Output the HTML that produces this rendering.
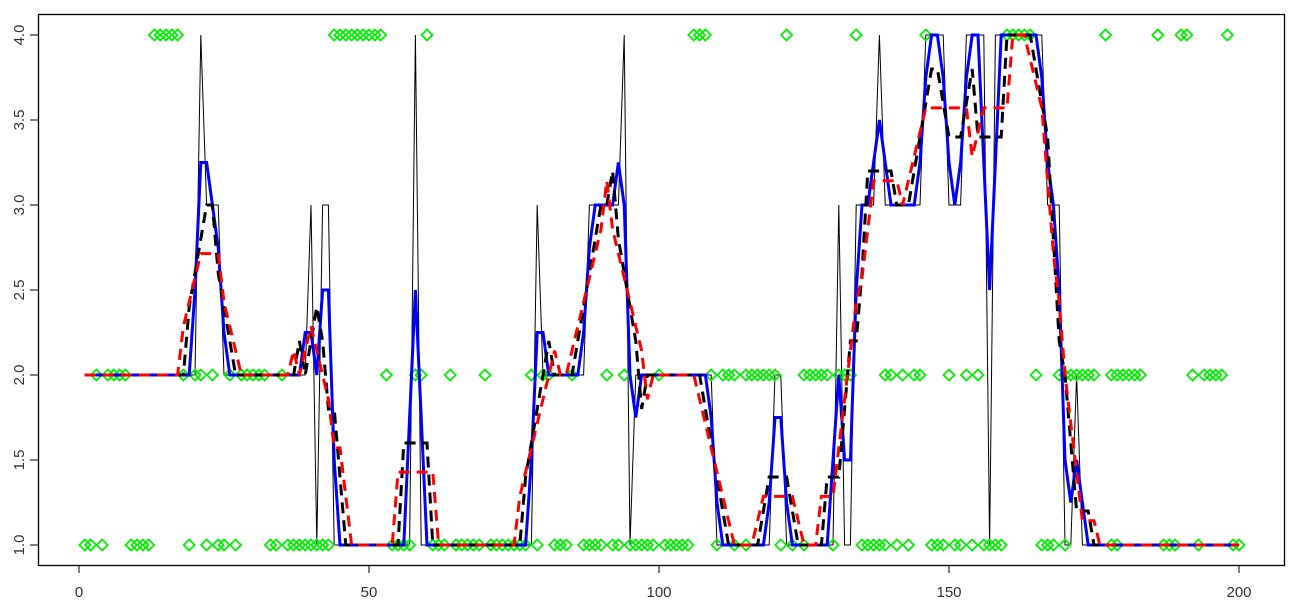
<!DOCTYPE html>
<html><head><meta charset="utf-8">
<style>
html,body{margin:0;padding:0;background:#fff;}
svg{display:block;}
text{font-family:"Liberation Sans",sans-serif;font-size:15px;fill:#333;}
</style></head>
<body>
<svg id="s" width="1295" height="609" viewBox="0 0 1295 609" xmlns="http://www.w3.org/2000/svg">
<rect x="38.5" y="14.5" width="1246" height="551" fill="none" stroke="#000" stroke-width="1.3"/>
<g stroke="#000" stroke-width="1">
<line x1="79" y1="565" x2="79" y2="573"/><line x1="369" y1="565" x2="369" y2="573"/>
<line x1="659" y1="565" x2="659" y2="573"/><line x1="949" y1="565" x2="949" y2="573"/>
<line x1="1239" y1="565" x2="1239" y2="573"/>
<line x1="38" y1="545" x2="30" y2="545"/><line x1="38" y1="460" x2="30" y2="460"/>
<line x1="38" y1="375" x2="30" y2="375"/><line x1="38" y1="290" x2="30" y2="290"/>
<line x1="38" y1="205" x2="30" y2="205"/><line x1="38" y1="120" x2="30" y2="120"/>
<line x1="38" y1="35" x2="30" y2="35"/>
</g>
<g text-anchor="middle">
<text x="79" y="597">0</text><text x="369" y="597">50</text><text x="659" y="597">100</text>
<text x="949" y="597">150</text><text x="1239" y="597">200</text>
<text transform="translate(24,545) rotate(-90)">1.0</text>
<text transform="translate(24,460) rotate(-90)">1.5</text>
<text transform="translate(24,375) rotate(-90)">2.0</text>
<text transform="translate(24,290) rotate(-90)">2.5</text>
<text transform="translate(24,205) rotate(-90)">3.0</text>
<text transform="translate(24,120) rotate(-90)">3.5</text>
<text transform="translate(24,35) rotate(-90)">4.0</text>
</g>
<g id="plot"></g>
</svg>
<script>
var v=[];
function set(a,b,val){for(var i=a;i<=b;i++)v[i]=val;}
set(1,20,2);v[21]=4;set(22,24,3);set(25,39,2);v[40]=3;v[41]=1;set(42,43,3);set(44,57,1);v[58]=4;set(59,78,1);
v[79]=3;set(80,87,2);set(88,93,3);v[94]=4;v[95]=1;set(96,109,2);set(110,119,1);set(120,121,2);set(122,130,1);
v[131]=3;set(132,133,1);set(134,137,3);v[138]=4;set(139,145,3);set(146,149,4);set(150,152,3);set(153,156,4);
v[157]=1;set(158,166,4);set(167,169,3);set(170,171,1);v[172]=2;set(173,200,1);
function X(i){return 79+5.8*i;}function Y(y){return 545-170*(y-1);}
function ma(k){var r=[];for(var i=1;i<=200;i++){var s=0,n=0;for(var j=i-k;j<=i+k;j++){if(j>=1&&j<=200){s+=v[j];n++;}}r[i]=s/n;}return r;}
function tri(){var r=[];for(var i=1;i<=200;i++){var a=v[Math.max(1,i-1)],b=v[Math.min(200,i+1)];r[i]=0.25*a+0.5*v[i]+0.25*b;}return r;}
function path(a){var d="";for(var i=1;i<=200;i++)d+=(i==1?"M":"L")+X(i).toFixed(1)+" "+Y(a[i]).toFixed(1);return d;}
var g=document.getElementById("plot"),h="";
h+='<path d="'+path(v)+'" fill="none" stroke="#000" stroke-width="1"/>';
var pts={4:[13,14,15,16,17,44,45,46,47,48,49,50,51,52,60,106,107,108,122,134,146,160,161,162,163,164,177,186,190,191,198],
2:[3,5,6,7,8,18,20,21,23,26,28,29,30,31,32,35,53,58,59,64,70,78,80,81,85,91,94,100,109,111,112,113,115,116,117,118,119,120,125,126,127,128,129,131,132,133,139,140,142,144,145,150,153,155,165,169,170,171,172,173,174,175,178,179,180,181,182,183,192,194,195,196,197],
1:[1,2,4,9,10,11,12,19,22,24,25,27,33,34,36,37,38,39,40,41,42,43,54,55,56,57,61,62,63,65,66,67,68,69,71,72,73,74,75,76,77,79,82,83,84,87,88,89,90,92,93,95,96,97,98,99,101,102,103,104,105,110,113,115,121,123,125,130,135,136,137,138,139,141,143,147,148,149,151,152,154,156,157,158,159,166,167,168,170,178,179,187,188,189,193,199,200]};
for(var k in pts){pts[k].forEach(function(i){var x=X(i),y=Y(+k);h+='<path d="M'+(x-5.5)+' '+y+'L'+x+' '+(y-5.5)+'L'+(x+5.5)+' '+y+'L'+x+' '+(y+5.5)+'Z" fill="none" stroke="#00ee00" stroke-width="1.8"/>';});}
h+='<path d="'+path(tri())+'" fill="none" stroke="#0000ff" stroke-width="3"/>';
h+='<path d="'+path(ma(2))+'" fill="none" stroke="#000" stroke-width="3" stroke-dasharray="11 7"/>';
h+='<path d="'+path(ma(3))+'" fill="none" stroke="#ff0000" stroke-width="3" stroke-dasharray="11 7"/>';
g.innerHTML=h;
</script>
</body></html>
